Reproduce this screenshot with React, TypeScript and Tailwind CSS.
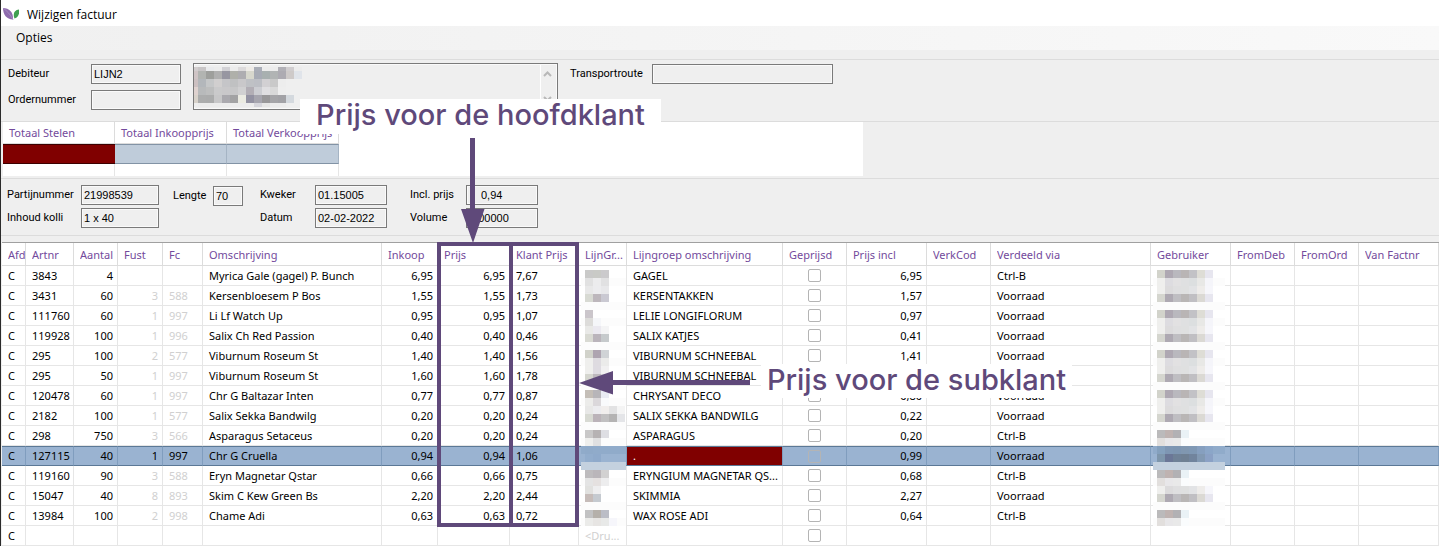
import React from "react";

type Column = { name: string; width: number; right?: boolean };

const columns: Column[] = [
  { name: "Afd", width: 24 },
  { name: "Artnr", width: 48 },
  { name: "Aantal", width: 44, right: true },
  { name: "Fust", width: 45, right: true },
  { name: "Fc", width: 40 },
  { name: "Omschrijving", width: 179 },
  { name: "Inkoop", width: 56, right: true },
  { name: "Prijs", width: 72, right: true },
  { name: "Klant Prijs", width: 69 },
  { name: "LijnGr...", width: 48 },
  { name: "Lijngroep omschrijving", width: 156 },
  { name: "Geprijsd", width: 64 },
  { name: "Prijs incl", width: 80, right: true },
  { name: "VerkCod", width: 64 },
  { name: "Verdeeld via", width: 160 },
  { name: "Gebruiker", width: 80 },
  { name: "FromDeb", width: 64 },
  { name: "FromOrd", width: 64 },
  { name: "Van Factnr", width: 80 },
];

// Afd, Artnr, Aantal, Fust, Fc, Omschrijving, Inkoop, Prijs, Klant Prijs,
// LijnGr, Lijngroep omschrijving, Geprijsd, Prijs incl, VerkCod, Verdeeld via
const rows: string[][] = [
  ["C", "3843", "4", "", "", "Myrica Gale (gagel) P. Bunch", "6,95", "6,95", "7,67", "", "GAGEL", "", "6,95", "", "Ctrl-B"],
  ["C", "3431", "60", "3", "588", "Kersenbloesem P Bos", "1,55", "1,55", "1,73", "", "KERSENTAKKEN", "", "1,57", "", "Voorraad"],
  ["C", "111760", "60", "1", "997", "Li Lf Watch Up", "0,95", "0,95", "1,07", "", "LELIE LONGIFLORUM", "", "0,97", "", "Voorraad"],
  ["C", "119928", "100", "1", "996", "Salix Ch Red Passion", "0,40", "0,40", "0,46", "", "SALIX KATJES", "", "0,41", "", "Voorraad"],
  ["C", "295", "100", "2", "577", "Viburnum Roseum St", "1,40", "1,40", "1,56", "", "VIBURNUM SCHNEEBAL", "", "1,41", "", "Voorraad"],
  ["C", "295", "50", "1", "997", "Viburnum Roseum St", "1,60", "1,60", "1,78", "", "VIBURNUM SCHNEEBAL", "", "", "", ""],
  ["C", "120478", "60", "1", "997", "Chr G Baltazar Inten", "0,77", "0,77", "0,87", "", "CHRYSANT DECO", "", "0,80", "", "Voorraad"],
  ["C", "2182", "100", "1", "577", "Salix Sekka Bandwilg", "0,20", "0,20", "0,24", "", "SALIX SEKKA BANDWILG", "", "0,22", "", "Voorraad"],
  ["C", "298", "750", "3", "566", "Asparagus Setaceus", "0,20", "0,20", "0,24", "", "ASPARAGUS", "", "0,20", "", "Ctrl-B"],
  ["C", "127115", "40", "1", "997", "Chr G Cruella", "0,94", "0,94", "1,06", "", ".", "", "0,99", "", "Voorraad"],
  ["C", "119160", "90", "3", "588", "Eryn Magnetar Qstar", "0,66", "0,66", "0,75", "", "ERYNGIUM MAGNETAR QS...", "", "0,68", "", "Ctrl-B"],
  ["C", "15047", "40", "8", "893", "Skim C Kew Green Bs", "2,20", "2,20", "2,44", "", "SKIMMIA", "", "2,27", "", "Voorraad"],
  ["C", "13984", "100", "2", "998", "Chame Adi", "0,63", "0,63", "0,72", "", "WAX ROSE ADI", "", "0,64", "", "Ctrl-B"],
  ["C", "", "", "", "", "", "", "", "", "<Dru...", "", "", "", "", ""],
];

const SELECTED = 9;

// Pixelated blocks that hide private values; each string is one row of hex colours.
const userTop = "d2d3cb aea8b2 b9b8be b9b5b5 c2c2c6 deddd6 e7e6ef";
const userUpper = "efefed dddce0 e2e1e2 dfe0e1 dcdfe0 e8e8e6 f5f5fa";
const userLower = "efefed dcdbdc dfdfe0 dfe0e0 e2e3e5 eeecea f6f6fb";
const userBottom = "d5d6cf aea9b2 bfbec2 b9b6b5 c0bfc3 dbd9d4 e7e6ef";
const shortTop = "bbbabb bfb3b1 b2b1b4 eaf2f6";
const shortBottom = "e2dfdd e8e7e9 e9e9e9 fafcfd";
const full = [userTop, userUpper, userLower, userBottom, ""];

const userBlocks: string[] = [
  ...full, ...full, ...full, ...full,
  shortTop, shortBottom,
  "84a0bd 7e96b3 7d95b1 8097b0 7f98b4 869fbf 8ba6c8",
  "7e96ac 6b7797 6f8197 6f8093 71849d 8299b3 8ba1c5",
  "",
  shortTop, shortBottom, userLower, userBottom, "",
  shortTop, shortBottom,
];

const groupBlocks: string[] = [
  "c9c9c8 c9cac6 cbcacc", "e1e1e1 ececed e1e1e2", "e8e8e8 ececee e8e8ea", "d8dad3 bdb7bc cac9d2", "",
  "cbc6cb", "dddcda f5f6f9", "e9e9e7 ebe9f0 f4f4f5", "d9dad3 bab4bb c6cacc", "",
  "d1d2ca aea4b0 d0d3d6", "efefed dedbe0 ebebea", "efefed dedbe1 f1f0f1", "d5d6cf bdb8bd d8d8d8", "",
  "c4beb7 b7b5b9 e9ebf3", "ececea dbd8db f9fafc", "e8e8e7 ececef f1eeed e2e2e3 f4f4f4", "d8dad3 bbb3b9 c1c0c1 b4b3b3 e4e5e8", "",
  "c9c8c8 b6b2b3 dedee3", "efefed e0e0e1",
  "8faac9 90abca 90abca 90abca 90abca", "92adcd 8faacb 9ab3d1 9ab3d1 9ab3d1", "",
  "bebcbe bab6ba d2d1d1", "e4e4e4 e5e1e0 ededee", "e1e1df eeeeef", "c6bcb9 c5cad0", "",
  "c2c2c3 b5b0aa bbbdc6", "ebebe9 e7e5e3 e8e9e8 f6f6fb",
];

const addressBlocks: string[] = [
  "d2cdce c8c5c6 e9eaec ececec d2d1d5 ececec dcdadb eeebe7 a9adb7 ececec ececec b1b0b6 d0cdcf ececec",
  "cfc4c5 b2b4b1 9e9f9c b0b0b0 9796a1 afb0aa aeadb1 d7d7cd a7abb5 a8b0b0 b1b4b4 adabb2 cecac9 e0e4ea",
  "ccc0c1 b3b7bb c5c7c8 d1cfcf c5c5c8 c0c1c2 c9c8ca bfc1c5 bdbfc5 d2d0d3 c9c9c9 ededed",
  "dfd2cf b8babb bdbebe cacacb c9c8ca c7c7c8 d0d0d1 b2aeb5 cccdd2 dfdee1 d9d9d9 eeeeee",
  "d8d2ca acadad abacac c7c7c8 aaa9ae a2a2a3 ebebe2 9392a2 a6a5ae 989799 a5a5a8 a2a2a6 d4d9de",
  "eeeeee ececec ececec ececec ececec ececec ececec ececec d6d6dc e6e6e6 ececec ececec",
];

function Blocks({ data, width, wash, className }: { data: string[]; width: number; wash?: boolean; className: string }) {
  const height = data.length * 8;
  const left = wash ? 4 : 0;
  return (
    <svg aria-hidden="true" width={width} height={height} shapeRendering="crispEdges" className={className}>
      {wash && <rect width={width} height={height} fill="#ffffff" />}
      {data.map((line, y) => (
        <g key={y}>
          {wash && [1, 4].includes(y % 5) && y !== 24 && <rect y={y * 8} width={width} height={8} fill="#fcfcfc" />}
          {wash && y === 22 && <rect y={y * 8} width={width} height={8} fill="#90abca" />}
          {wash && y === 23 && <rect y={y * 8} width={width} height={8} fill="#9ab3d1" />}
          {wash && y === 24 && <rect y={y * 8} width={width} height={8} fill="#c4d1df" />}
          {line.split(" ").map((c, x) =>
            c ? <rect key={x} x={left + x * 8} y={y * 8} width={8} height={8} fill={"#" + c} /> : null
          )}
        </g>
      ))}
    </svg>
  );
}

const box =
  "h-5 border border-[#7a7a7a] bg-[#efefef] px-0.5 font-['Liberation_Sans',Arial,sans-serif] text-[11px] leading-4 text-black shadow-[inset_0_0_0_1px_#fafafa] outline-none";

function Field({ id, label, value, className, inputClass = "" }: { id: string; label: string; value: string; className: string; inputClass?: string }) {
  return (
    <div className={"grid items-center " + className}>
      <label htmlFor={id}>{label}</label>
      <input id={id} readOnly value={value} className={box + " w-full " + inputClass} />
    </div>
  );
}

function Invoice() {
  const total = columns.reduce((sum, c) => sum + c.width, 0);
  return (
    <table className="w-full table-fixed border-separate border-spacing-0 border-t border-[#a0a0a0] bg-white font-['Noto_Sans','Open_Sans',sans-serif] text-[11px] leading-[18px]">
      <colgroup>
        {columns.map((c) => (
          <col key={c.name} style={{ width: (c.width / total) * 100 + "%" }} />
        ))}
      </colgroup>
      <thead>
        <tr>
          {columns.map((c) => (
            <th
              key={c.name}
              scope="col"
              className="relative h-[23px] border-r border-b border-[#dcdcdc] p-0 pt-0.5 pl-1.5 text-left font-normal whitespace-nowrap text-[#734a9c]"
            >
              <span className="block overflow-hidden">{c.name}</span>
              {c.name === "LijnGr..." && <Blocks data={groupBlocks} width={45} wash className="absolute top-[27px] left-0.5" />}
              {c.name === "Gebruiker" && <Blocks data={userBlocks} width={72} wash className="absolute top-[27px] left-0.5" />}
              {c.name === "Prijs" && <span className="absolute -top-px -right-1 -left-px h-[285px] border-4 border-[#5f497a]" />}
              {c.name === "Klant Prijs" && <span className="absolute -top-px -right-px -left-px h-[285px] border-4 border-[#5f497a]" />}
            </th>
          ))}
        </tr>
      </thead>
      <tbody>
        {rows.map((row, r) => {
          const selected = r === SELECTED;
          return (
            <tr key={r} className={selected ? "bg-[#9ab3d1]" : ""}>
              {columns.map((c, i) => {
                const text = row[i] ?? "";
                const faded = (!selected && (i === 3 || i === 4)) || i === 9;
                const red = selected && i === 10;
                const check = c.name === "Geprijsd";
                return (
                  <td
                    key={c.name}
                    className={
                      "h-5 overflow-hidden border-r p-0 whitespace-nowrap " +
                      (selected ? "border-y border-y-[#5b7896] border-r-[#809dbe] " : "border-b border-[#e6e6e6] ") +
                      (c.right ? "pr-1 text-right " : check ? "" : "pl-1.5 ") +
                      (red ? "bg-[#800000] text-white" : faded ? "text-[#d0d0d0]" : "text-black")
                    }
                  >
                    {check ? (
                      <input
                        type="checkbox"
                        aria-label={"Geprijsd " + row[5]}
                        className="mx-auto block size-[13px] appearance-none rounded-xs border border-[#b4b4b4]"
                      />
                    ) : (
                      text
                    )}
                  </td>
                );
              })}
            </tr>
          );
        })}
      </tbody>
    </table>
  );
}

const callout =
  "absolute flex justify-center bg-white font-['Inter','Liberation_Sans',sans-serif] text-[29px] leading-8 font-medium whitespace-nowrap text-[#5f497a]";

export default function App() {
  return (
    <main className="relative min-h-screen overflow-hidden border-l border-[#2b2b2b] bg-[#efefef] font-['Roboto','Liberation_Sans',sans-serif] text-[11px] leading-4 text-black">
      <header className="flex h-[26px] items-center gap-2 bg-white pt-1 pl-0.5 font-['Open_Sans','Noto_Sans',sans-serif] text-xs leading-5">
        <svg width="16" height="12" viewBox="0 0 16 12" aria-hidden="true" className="mb-0.5">
          <path d="M0 0C6 0 10.500 4 10 11.500C3.500 11.500 0 6.500 0 0Z" fill="#8e6bad" />
          <path d="M0 0C4 3 7 6 10 11.500" stroke="#a58bc0" fill="none" />
          <path d="M16 1.500C11.500 2 9.500 5.500 11.500 10.500C15.500 9.500 16.500 6 16 1.500Z" fill="#3f9f50" />
        </svg>
        <h1>Wijzigen factuur</h1>
      </header>
      <nav className="flex h-6 items-center bg-linear-to-r from-[#f0f0f0] to-[#f9f9f9] pl-[15px] font-['Open_Sans','Noto_Sans',sans-serif] text-xs">
        <button type="button">Opties</button>
      </nav>

      <section className="mt-[9px] flex h-[62px] items-start border-t border-[#dcdcdc] pt-1 pl-[7px]">
        <div className="grid gap-1.5">
          <Field id="debiteur" label="Debiteur" value="LIJN2" className="grid-cols-[83px_90px]" />
          <Field id="order" label="Ordernummer" value="" className="grid-cols-[83px_90px]" />
        </div>
        <div className="relative -mt-px ml-3">
          <textarea
            aria-label="Adres"
            readOnly
            className="block h-[47px] w-[365px] resize-none border border-[#7a7a7a] bg-[#efefef] shadow-[inset_0_0_0_1px_#fafafa] outline-none"
          />
          <div className="absolute top-1 left-px h-[40px] w-28 overflow-hidden">
            <Blocks data={addressBlocks} width={112} className="-mt-1 -ml-1" />
          </div>
          <div className="absolute inset-y-0.5 right-1 flex w-[14px] flex-col items-center justify-between border-l border-white py-1.5">
            <svg width="9" height="6" viewBox="0 0 9 6" fill="none" stroke="#b8b8b8" strokeWidth="2" aria-hidden="true">
              <path d="M1 5L4.5 1.5L8 5" />
            </svg>
            <svg width="9" height="6" viewBox="0 0 9 6" fill="none" stroke="#b8b8b8" strokeWidth="2" aria-hidden="true">
              <path d="M1 1L4.5 4.5L8 1" />
            </svg>
          </div>
        </div>
        <Field id="route" label="Transportroute" value="" className="ml-3 grid-cols-[82px_181px]" />
      </section>

      <section className="border-t border-[#dcdcdc] pl-0.5">
        <div className="h-[54px] max-w-[860px] overflow-hidden bg-white">
          <table className="w-[336px] table-fixed border-separate border-spacing-0 font-['Noto_Sans','Open_Sans',sans-serif]">
            <thead>
              <tr>
                {["Totaal Stelen", "Totaal Inkoopprijs", "Totaal Verkoopprijs"].map((t) => (
                  <th key={t} scope="col" className="h-[22px] border-r border-b border-[#dcdcdc] p-0 pl-1.5 text-left font-normal whitespace-nowrap text-[#734a9c]">
                    {t}
                  </th>
                ))}
              </tr>
            </thead>
            <tbody>
              <tr>
                <td className="h-5 border-y border-[#3c0000] bg-[#800000] p-0" />
                <td className="h-5 border-y border-r border-[#8293a5] border-r-[#a5b4c4] bg-[#bfccda] p-0" />
                <td className="h-5 border-y border-r border-[#8293a5] border-r-[#a5b4c4] bg-[#bfccda] p-0" />
              </tr>
              <tr>
                <td className="h-4 border-r border-[#e6e6e6] p-0" />
                <td className="h-4 border-r border-[#e6e6e6] p-0" />
                <td className="h-4 border-r border-[#e6e6e6] p-0" />
              </tr>
            </tbody>
          </table>
        </div>
      </section>

      <section className="mt-0.5 mb-1.5 flex h-[58px] items-start border-y border-[#dcdcdc] pt-1.5 pl-1.5">
        <div className="grid gap-[3px]">
          <Field id="partij" label="Partijnummer" value="21998539" className="grid-cols-[74px_78px]" />
          <Field id="kolli" label="Inhoud kolli" value="1 x 40" className="grid-cols-[74px_78px]" />
        </div>
        <Field id="lengte" label="Lengte" value="70" className="mt-px ml-3.5 grid-cols-[40px_30px]" />
        <div className="ml-[17px] grid gap-[3px]">
          <Field id="kweker" label="Kweker" value="01.15005" className="grid-cols-[55px_72px]" />
          <Field id="datum" label="Datum" value="02-02-2022" className="grid-cols-[55px_72px]" />
        </div>
        <div className="ml-[23px] grid gap-[3px]">
          <Field id="incl" label="Incl. prijs" value="0,94" className="grid-cols-[56px_72px]" inputClass="pl-3.5" />
          <Field id="volume" label="Volume" value="0,00000" className="grid-cols-[56px_72px]" />
        </div>
      </section>

      <div className="pl-px">
        <Invoice />
      </div>

      <p className={callout + " top-[99px] left-[299px] h-[35px] w-[361px]"}>Prijs voor de hoofdklant</p>
      <svg width="24" height="105" viewBox="0 0 24 105" fill="#5f497a" aria-hidden="true" className="absolute top-[138px] left-[460px]">
        <path d="M9 0H14V71H23.500L12 105L0 71H9Z" />
      </svg>
      <p className={callout + " top-[364px] left-[760px] h-[34px] w-[311px]"}>Prijs voor de subklant</p>
      <svg width="171" height="24" viewBox="0 0 171 24" fill="#5f497a" aria-hidden="true" className="absolute top-[371px] left-[578px]">
        <path d="M171 9V14H34V23.500L0 12L34 0V9Z" />
      </svg>
    </main>
  );
}
